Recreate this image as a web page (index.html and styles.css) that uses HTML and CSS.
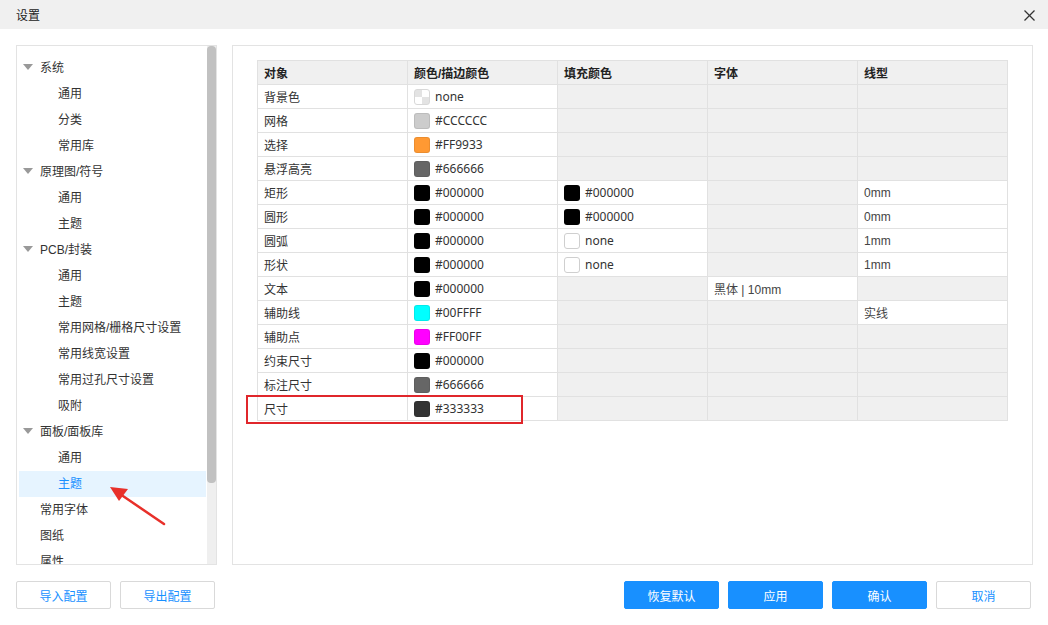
FILE: index.html
```html
<!DOCTYPE html>
<html lang="zh">
<head>
<meta charset="utf-8">
<title>设置</title>
<link rel="stylesheet" href="styles.css">
</head>
<body>
<div class="dialog">
  <div class="titlebar">
    <span class="title">设置</span>
    <svg class="close" width="11" height="11" viewBox="0 0 11 11">
      <line x1="0.5" y1="0.5" x2="10.5" y2="10.5" stroke="#333" stroke-width="1.2"/>
      <line x1="10.5" y1="0.5" x2="0.5" y2="10.5" stroke="#333" stroke-width="1.2"/>
    </svg>
  </div>
  <div class="main">
    <div class="left">
      <ul class="tree">
        <li class="row parent"><i class="tri"></i>系统</li>
        <li class="row child">通用</li>
        <li class="row child">分类</li>
        <li class="row child">常用库</li>
        <li class="row parent"><i class="tri"></i>原理图/符号</li>
        <li class="row child">通用</li>
        <li class="row child">主题</li>
        <li class="row parent"><i class="tri"></i>PCB/封装</li>
        <li class="row child">通用</li>
        <li class="row child">主题</li>
        <li class="row child">常用网格/栅格尺寸设置</li>
        <li class="row child">常用线宽设置</li>
        <li class="row child">常用过孔尺寸设置</li>
        <li class="row child">吸附</li>
        <li class="row parent"><i class="tri"></i>面板/面板库</li>
        <li class="row child">通用</li>
        <li class="row child selected">主题</li>
        <li class="row leaf">常用字体</li>
        <li class="row leaf">图纸</li>
        <li class="row leaf">属性</li>
      </ul>
      <div class="scrollbar"><div class="thumb"></div></div>
      <svg class="arrow" width="80" height="60" viewBox="0 0 80 60">
        <line x1="70" y1="50" x2="26" y2="20" stroke="#e8302a" stroke-width="2.5" stroke-linecap="round"/>
        <polygon points="16,13 34,15 25,27" fill="#e8302a"/>
      </svg>
    </div>
    <div class="right">
      <table class="grid">
        <thead>
          <tr><th>对象</th><th>颜色/描边颜色</th><th>填充颜色</th><th>字体</th><th>线型</th></tr>
        </thead>
        <tbody>
          <tr><td>背景色</td><td><span class="sw checker"></span><span class="val">none</span></td><td class="off"></td><td class="off"></td><td class="off"></td></tr>
          <tr><td>网格</td><td><span class="sw" style="background:#cccccc"></span><span class="val">#CCCCCC</span></td><td class="off"></td><td class="off"></td><td class="off"></td></tr>
          <tr><td>选择</td><td><span class="sw" style="background:#ff9933"></span><span class="val">#FF9933</span></td><td class="off"></td><td class="off"></td><td class="off"></td></tr>
          <tr><td>悬浮高亮</td><td><span class="sw" style="background:#666666"></span><span class="val">#666666</span></td><td class="off"></td><td class="off"></td><td class="off"></td></tr>
          <tr><td>矩形</td><td><span class="sw" style="background:#000000"></span><span class="val">#000000</span></td><td><span class="sw" style="background:#000000"></span><span class="val">#000000</span></td><td class="off"></td><td class="plain">0mm</td></tr>
          <tr><td>圆形</td><td><span class="sw" style="background:#000000"></span><span class="val">#000000</span></td><td><span class="sw" style="background:#000000"></span><span class="val">#000000</span></td><td class="off"></td><td class="plain">0mm</td></tr>
          <tr><td>圆弧</td><td><span class="sw" style="background:#000000"></span><span class="val">#000000</span></td><td><span class="sw empty"></span><span class="val">none</span></td><td class="off"></td><td class="plain">1mm</td></tr>
          <tr><td>形状</td><td><span class="sw" style="background:#000000"></span><span class="val">#000000</span></td><td><span class="sw empty"></span><span class="val">none</span></td><td class="off"></td><td class="plain">1mm</td></tr>
          <tr><td>文本</td><td><span class="sw" style="background:#000000"></span><span class="val">#000000</span></td><td class="off"></td><td class="plain">黑体 | 10mm</td><td class="off"></td></tr>
          <tr><td>辅助线</td><td><span class="sw" style="background:#00ffff"></span><span class="val">#00FFFF</span></td><td class="off"></td><td class="off"></td><td class="plain">实线</td></tr>
          <tr><td>辅助点</td><td><span class="sw" style="background:#ff00ff"></span><span class="val">#FF00FF</span></td><td class="off"></td><td class="off"></td><td class="off"></td></tr>
          <tr><td>约束尺寸</td><td><span class="sw" style="background:#000000"></span><span class="val">#000000</span></td><td class="off"></td><td class="off"></td><td class="off"></td></tr>
          <tr><td>标注尺寸</td><td><span class="sw" style="background:#666666"></span><span class="val">#666666</span></td><td class="off"></td><td class="off"></td><td class="off"></td></tr>
          <tr><td>尺寸</td><td><span class="sw" style="background:#333333"></span><span class="val">#333333</span></td><td class="off"></td><td class="off"></td><td class="off"></td></tr>
        </tbody>
      </table>
      <div class="highlight"></div>
    </div>
  </div>
  <div class="footer">
    <div class="group">
      <button class="btn">导入配置</button>
      <button class="btn">导出配置</button>
    </div>
    <div class="group">
      <button class="btn primary">恢复默认</button>
      <button class="btn primary">应用</button>
      <button class="btn primary">确认</button>
      <button class="btn">取消</button>
    </div>
  </div>
</div>
</body>
</html>
```

FILE: styles.css
```css
* { box-sizing: border-box; }
html, body { margin: 0; padding: 0; background: #ffffff; }
body {
  font-family: "Liberation Sans", "Noto Sans CJK SC", sans-serif;
  font-size: 12px;
  color: #333333;
  width: 1048px;
  height: 625px;
  overflow: hidden;
}
.dialog { width: 1048px; height: 625px; display: flex; flex-direction: column; }
.titlebar {
  height: 29px;
  background: #f0f0f0;
  display: flex;
  align-items: center;
  justify-content: space-between;
  padding: 0 13px 0 16px;
  flex: none;
}
.title { font-size: 12px; color: #222; }
.close { display: block; margin-top: 1px; }
.main {
  display: flex;
  gap: 15px;
  padding: 16px 17px 0 16px;
  height: 536px;
  flex: none;
}
.left {
  position: relative;
  width: 201px;
  flex: none;
  height: 520px;
  border: 1px solid #e3e3e3;
}
.tree {
  list-style: none;
  margin: 0;
  padding: 9px 0 0 2px;
  height: 518px;
  overflow: hidden;
  width: 189px;
}
.row {
  height: 26px;
  line-height: 26px;
  white-space: nowrap;
  color: #333;
}
.parent { padding-left: 21px; display: flex; align-items: center; }
.child { padding-left: 39px; }
.leaf { padding-left: 21px; }
.selected { background: #e6f4ff; color: #1890ff; }
.tri {
  display: inline-block;
  width: 0; height: 0;
  border-left: 5px solid transparent;
  border-right: 5px solid transparent;
  border-top: 6px solid #999999;
  margin-left: -17px;
  margin-right: 7px;
  margin-top: -2px;
}
.scrollbar {
  position: absolute;
  top: 0; right: 0;
  width: 9px;
  height: 518px;
  background: #efefef;
}
.thumb {
  height: 437px;
  background: #c1c1c1;
  border-radius: 4px;
}
.arrow { position: absolute; left: 77px; top: 428px; }
.right {
  position: relative;
  flex: 1;
  height: 520px;
  border: 1px solid #e3e3e3;
  padding: 14px 24px;
}
.grid {
  border-collapse: collapse;
  table-layout: fixed;
  width: 750px;
}
.grid th, .grid td {
  border: 1px solid #e1e1e1;
  width: 150px;
  height: 24px;
  padding: 0 6px;
  text-align: left;
  white-space: nowrap;
  font-size: 12px;
}
.grid th {
  background: #f0f0f0;
  font-weight: bold;
  color: #222;
}
.grid td { background: #ffffff; color: #333; }
.grid td.off { background: #f0f0f0; }
.grid td.plain { color: #444; }
.val { font-family: "Noto Sans", "Noto Sans CJK SC", sans-serif; font-size: 12px; }
.sw {
  display: inline-block;
  width: 16px;
  height: 16px;
  border-radius: 3px;
  vertical-align: middle;
  margin: -2px 5px 0 0;
  border: 1px solid rgba(0,0,0,0.08);
}
.sw.empty { background: #fff; border: 1px solid #cfcfcf; }
.sw.checker {
  border: 1px solid #d8d8d8;
  background:
    linear-gradient(#e3e3e3, #e3e3e3) 0 0 / 7px 7px no-repeat,
    linear-gradient(#e3e3e3, #e3e3e3) 7px 7px / 7px 7px no-repeat,
    #ffffff;
}
.highlight {
  position: absolute;
  left: 13px;
  top: 349px;
  width: 277px;
  height: 29px;
  border: 2px solid #e0262b;
}
.footer {
  display: flex;
  justify-content: space-between;
  padding: 16px 17px 0 16px;
}
.group { display: flex; gap: 9px; }
.btn {
  width: 95px;
  height: 28px;
  border: 1px solid #d9d9d9;
  border-radius: 2px;
  background: #ffffff;
  color: #1890ff;
  font-family: "Liberation Sans", "Noto Sans CJK SC", sans-serif;
  font-size: 12px;
  padding: 0;
}
.btn.primary { background: #1890ff; border-color: #1890ff; color: #ffffff; }
```
